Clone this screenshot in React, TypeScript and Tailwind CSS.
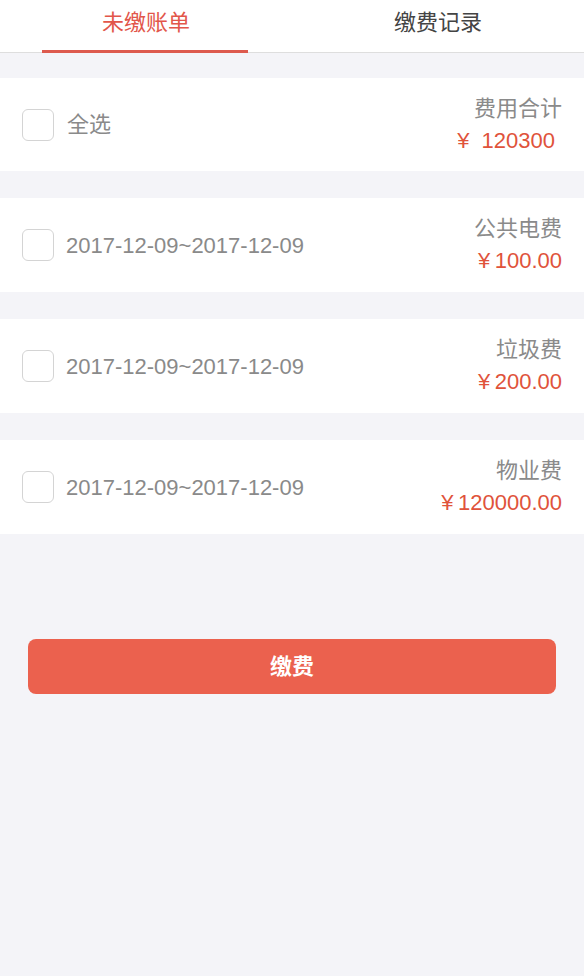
import React, { useState } from 'react';

const bills = [
  { id: 1, range: '2017-12-09~2017-12-09', name: '公共电费', amount: '100.00' },
  { id: 2, range: '2017-12-09~2017-12-09', name: '垃圾费', amount: '200.00' },
  { id: 3, range: '2017-12-09~2017-12-09', name: '物业费', amount: '120000.00' },
];

const font = { fontFamily: '"Liberation Sans", "Noto Sans CJK SC", sans-serif' };

const Box = ({ checked, onClick }: { checked: boolean; onClick: () => void }) => (
  <button
    onClick={onClick}
    className={`w-[32px] h-[32px] shrink-0 rounded-[6px] border-[1.5px] ${
      checked ? 'border-[#e8604c] bg-[#e8604c]' : 'border-[#d4d4d4] bg-white'
    }`}
  />
);

const App = () => {
  const [tab, setTab] = useState(0);
  const [picked, setPicked] = useState<number[]>([]);

  const toggle = (id: number) =>
    setPicked((p) => (p.includes(id) ? p.filter((x) => x !== id) : [...p, id]));
  const allPicked = picked.length === bills.length;

  return (
    <div className="min-h-[976px] bg-[#f4f4f8] text-[22px]" style={font}>
      {/* Tabs */}
      <div className="flex h-[53px] bg-white border-b border-[#dedede]">
        {['未缴账单', '缴费记录'].map((t, i) => (
          <button
            key={t}
            onClick={() => setTab(i)}
            className={`relative flex-1 flex items-start justify-center pt-[6px] ${
              tab === i ? 'text-[#e2564a]' : 'text-[#444]'
            }`}
          >
            {t}
            {tab === i && (
              <span className="absolute bottom-[-1px] left-[42px] right-[44px] h-[3px] bg-[#dd5a4e]" />
            )}
          </button>
        ))}
      </div>

      {/* Select all */}
      <div className="mt-[25px] h-[93px] bg-white flex items-center justify-between pl-[22px] pr-[22px]">
        <div className="flex items-center gap-[13px]">
          <Box
            checked={allPicked}
            onClick={() => setPicked(allPicked ? [] : bills.map((b) => b.id))}
          />
          <span className="text-[#8a8a8a]">全选</span>
        </div>
        <div className="flex flex-col items-end leading-[32px]">
          <span className="text-[#8a8a8a]">费用合计</span>
          <span className="text-[#e0533b] mr-[7px]">¥&nbsp; 120300</span>
        </div>
      </div>

      {/* Bill rows */}
      {bills.map((b) => (
        <div
          key={b.id}
          className="mt-[27px] h-[94px] bg-white flex items-center justify-between pl-[22px] pr-[22px]"
        >
          <div className="flex items-center gap-[12px]">
            <Box checked={picked.includes(b.id)} onClick={() => toggle(b.id)} />
            <span className="text-[#8a8a8a]">{b.range}</span>
          </div>
          <div className="flex flex-col items-end leading-[32px]">
            <span className="text-[#8a8a8a]">{b.name}</span>
            <span className="text-[#e0533b]">¥&thinsp;{b.amount}</span>
          </div>
        </div>
      ))}

      <div className="px-[28px] pt-[105px]">
        <button className="w-full h-[55px] rounded-[8px] bg-[#eb614e] text-white font-bold">
          缴费
        </button>
      </div>
    </div>
  );
};

export default App;
